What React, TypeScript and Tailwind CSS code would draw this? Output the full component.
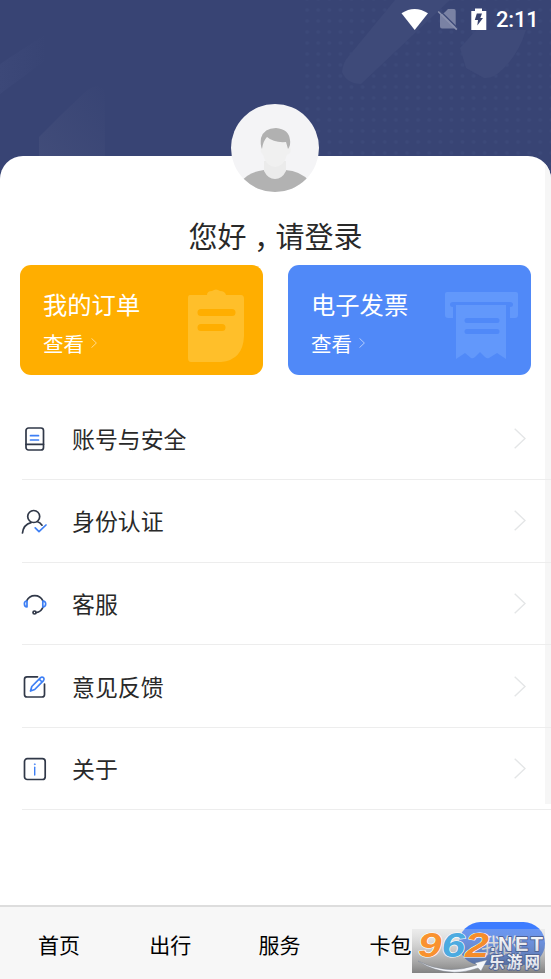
import type { ReactNode } from 'react';

const NAVY = '#303848';
const BLUE = '#3d7ff5';

function Header() {
  return (
    <svg className="absolute inset-0 h-full w-full" viewBox="0 0 551 190" preserveAspectRatio="none" aria-hidden="true">
      <defs>
        <pattern id="dots" x="291" y="5" width="11.1" height="11" patternUnits="userSpaceOnUse">
          <circle cx="5" cy="5" r="1.8" fill="#3c4979" />
        </pattern>
        <linearGradient id="shard" x1="0" y1="1" x2="1" y2="0">
          <stop offset="0" stopColor="#424d7a" />
          <stop offset="1" stopColor="#384474" />
        </linearGradient>
        <linearGradient id="edge" x1="0" y1="0" x2="1" y2="0">
          <stop offset="0" stopColor="#3c4878" />
          <stop offset="1" stopColor="#384474" />
        </linearGradient>
      </defs>
      <rect width="551" height="190" fill="#384474" />
      <rect x="300" width="251" height="170" fill="url(#dots)" />
      <path d="M39 170V137L62 114L83 94Q97 80 105 91V170Z" fill="url(#shard)" />
      <path d="M0 64L46 34V60L0 94Z" fill="url(#edge)" />
      <path d="M395 0H450L361 84Q347 84 342 72Q343 62 348 57Z" fill="#3e4a79" />
      <path d="M460 48L476 30H526Q519 53 504 68Q494 79 484 78L466 68Z" fill="#3e4a79" />
    </svg>
  );
}

function StatusBar() {
  return (
    <div className="relative flex h-10 justify-end">
      <svg className="h-10 w-[100px]" viewBox="395 0 100 40" aria-hidden="true">
        <path d="M401.5 13.3Q414.5 4.6 428 13.3L414.7 30Z" fill="#fff" />
        <path d="M444.500 12.500L448 9H454Q455.700 9 455.700 11V27L454.500 28.500H442Q440 28.500 440 26.500V15Z" fill="#7a82a4" />
        <path d="M439.500 10.300L458 28.500" stroke="#3e4a79" strokeWidth="1.3" />
        <path d="M438.200 11.500L456.800 29.700" stroke="#8a91af" strokeWidth="1.7" />
        <path d="M471.300 11H475V8.500H482V11H486.300V30H471.300Z" fill="#fff" />
        <path d="M476.800 13.500H482L480.300 18H483L477.300 25.500L478 20H474.800Z" fill="#36416d" />
      </svg>
      <span className="mr-[12px] w-[44px] whitespace-nowrap pl-[1px] pt-[4px] font-[Roboto] text-[22px] font-medium leading-8 tracking-[-0.2px] text-white">2:11</span>
    </div>
  );
}

function Avatar() {
  return (
    <svg className="absolute left-[231px] top-[-52px] size-[88px]" viewBox="0 0 88 88" aria-hidden="true">
      <defs>
        <clipPath id="face"><circle cx="44" cy="44" r="44" /></clipPath>
      </defs>
      <g clipPath="url(#face)">
        <rect width="88" height="88" fill="#f4f4f6" />
        <path d="M10 78Q17 68 33 66H54Q70 67 78 77V88H10Z" fill="#b2b2b2" />
        <path d="M33 57H55V67Q51 75 44 75Q37 75 33 67Z" fill="#ebebeb" />
        <path d="M31 34H58V43Q61 44 59 49L56 51Q53 62 44 63Q35 62 32 51L30 48Q29 43 31 43Z" fill="#f0f0f0" />
        <path d="M31 45Q29 41 30 34Q33 24 45 24Q58 25 59 36Q60 41 57 45L55 38Q43 39 36 33Q32 37 31 45Z" fill="#b1b1b1" />
      </g>
    </svg>
  );
}

function Arrow({ className }: { className: string }) {
  return (
    <svg className={className} viewBox="0 0 12 21" fill="none" stroke="currentColor" strokeWidth="1.4" aria-hidden="true">
      <path d="M.7.7L11 10.500L.7 20.300" />
    </svg>
  );
}

function Card({ title, color, children }: { title: string; color: string; children: ReactNode }) {
  return (
    <div className={`flex h-[110px] w-[243px] justify-between rounded-[11px] pl-[23px] ${color}`}>
      <div className="pt-[23px] text-white">
        <div className="whitespace-nowrap text-[24.300px] leading-[32px]">{title}</div>
        <div className="mt-[8px] flex items-center text-[20.500px] leading-[30px]">
          查看
          <Arrow className="ml-[7px] h-[10px] w-[6px] text-white/60 [stroke-width:2px]" />
        </div>
      </div>
      {children}
    </div>
  );
}

const menu: { label: string; icon: ReactNode }[] = [
  {
    label: '账号与安全',
    icon: (
      <>
        <rect x="6" y="4" width="17.500" height="22" rx="2.5" stroke={NAVY} />
        <path d="M6 20.300H23.500" stroke={NAVY} />
        <path d="M10.500 11.700H18.500M10.500 16H18.500" stroke={BLUE} />
      </>
    ),
  },
  {
    label: '身份认证',
    icon: (
      <>
        <circle cx="13.700" cy="10.500" r="6" stroke={NAVY} />
        <path d="M2.500 27Q3.500 18.500 11 16.600M17.500 15.800Q20 16.500 22 19.200" stroke={NAVY} />
        <path d="M15.200 21.800L19 25.600L26 19" stroke={BLUE} />
      </>
    ),
  },
  {
    label: '客服',
    icon: (
      <>
        <path d="M6.800 11.700A8.800 8.800 0 0 1 22.800 11.700M23.200 17.500Q21.500 23 16 23.700" stroke={NAVY} />
        <circle cx="14.500" cy="23.500" r="1.500" stroke={NAVY} />
        <path d="M7 12.200Q4.400 12 4.400 14.800Q4.400 17.900 7 18Z" stroke={BLUE} />
        <path d="M22.800 12.200Q25.700 12 25.700 15Q25.500 18 22.800 18Z" stroke={BLUE} />
      </>
    ),
  },
  {
    label: '意见反馈',
    icon: (
      <>
        <path d="M17.500 4.800H7Q4.500 4.800 4.500 7.300V22.500Q4.500 25 7 25H22Q24.500 25 24.500 22.500V12" stroke={NAVY} />
        <path d="M10.500 19L11.800 14.500L20.600 5.600Q22 4.400 23.600 5.700Q24.800 7.200 23.500 8.600L14.700 17.500ZM19.200 7.200L22.100 10" stroke={BLUE} />
      </>
    ),
  },
  {
    label: '关于',
    icon: (
      <>
        <rect x="4.500" y="4.700" width="20.700" height="20.800" rx="2.8" stroke={NAVY} />
        <path d="M14.700 13.200V21" stroke={BLUE} strokeWidth="1.4" />
        <circle cx="14.700" cy="10.200" r=".55" fill={BLUE} stroke={BLUE} strokeWidth=".5" />
      </>
    ),
  },
];

function Watermark() {
  return (
    <svg className="absolute left-[412px] top-[22px] h-[44px] w-[133px] overflow-visible" viewBox="0 0 133 44" role="img">
      <defs>
        <linearGradient id="veil" x1="0" y1="0" x2="0" y2="1">
          <stop offset="0" stopColor="#d2d2d2" stopOpacity=".3" />
          <stop offset="1" stopColor="#505050" stopOpacity=".7" />
        </linearGradient>
        <linearGradient id="steel" x1="0" y1="0" x2="0" y2="1">
          <stop offset="0" stopColor="#fff" />
          <stop offset="1" stopColor="#d4d8e2" />
        </linearGradient>
      </defs>
      <rect width="133" height="44" fill="url(#veil)" />
      <path d="M6 32Q34 47 65 36L63 34L75 31L69 42L66 39Q34 50 6 32Z" fill="#f5f7fb" stroke="#7c8698" strokeWidth=".4" />
      <g fontFamily="Liberation Sans, sans-serif" fontWeight="700" fontStyle="italic" fontSize="35" stroke="#fff" strokeWidth="1.2" paintOrder="stroke" strokeLinejoin="round">
        <text x="6" y="28" textLength="23.500" lengthAdjust="spacingAndGlyphs" fill="#f9922f">9</text>
        <text x="29.500" y="28" textLength="23.500" lengthAdjust="spacingAndGlyphs" fill="#4dabe0">6</text>
        <text x="53" y="28" textLength="24" lengthAdjust="spacingAndGlyphs" fill="#f58d2c">2</text>
      </g>
      <g fill="url(#steel)" stroke="#506393" strokeWidth="1.8" paintOrder="stroke" strokeLinejoin="round" fontWeight="700">
        <text x="78" y="22" fontSize="20" textLength="53" lengthAdjust="spacing" fontFamily="Liberation Sans, sans-serif">.NET</text>
        <text x="77" y="39" fontSize="15.500" textLength="51" lengthAdjust="spacing" fontFamily="Noto Sans CJK SC, sans-serif">乐游网</text>
      </g>
    </svg>
  );
}

export default function App() {
  return (
    <div className="relative flex h-[979px] w-[551px] flex-col overflow-hidden bg-white font-['Noto_Sans_CJK_SC',sans-serif] text-[#292929]">
      <header className="relative h-[156px] shrink-0">
        <div className="absolute inset-x-0 top-0 h-[190px]"><Header /></div>
        <StatusBar />
      </header>

      <main className="relative h-[749px] shrink-0 rounded-t-[23px] bg-white">
        <div className="absolute inset-0 overflow-hidden rounded-t-[23px]">
          <div className="ml-auto mt-[4px] h-[644px] w-[6px] bg-[#f6f6f6]" />
        </div>
        <Avatar />
        <h1 className="relative flex h-[109px] justify-center pt-[59px] text-[29px] font-normal leading-[40px]">
          <span>您好</span>
          <span lang="zh-Hant" className="relative top-[10px] font-['Noto_Sans_CJK_TC',sans-serif]">，</span>
          <span>请登录</span>
        </h1>
        <section className="relative flex gap-[25px] px-5">
          <Card title="我的订单" color="bg-[#ffae00]">
            <svg className="mr-[18px] mt-[22px] h-[78px] w-[60px]" viewBox="0 0 60 78" fill="#ffbf2a" aria-hidden="true">
              <path d="M5 8H22Q22 4 27 4Q31 1 35 4Q40 4 41 8H56Q59 8 59 12V49Q58 73 36 75H6Q3 75 3 71V11Q3 8 5 8Z" />
              <path d="M16 25.500H47M16 40.500H37" stroke="#ffae00" strokeWidth="7" strokeLinecap="round" />
            </svg>
          </Card>
          <Card title="电子发票" color="bg-[#5089f8]">
            <svg className="mr-[12px] mt-[25px] h-[71px] w-[76px]" viewBox="0 0 76 71" fill="#6298fb" aria-hidden="true">
              <path d="M4 2H73Q75 2 75 4V25Q75 28 72 28H67V17Q70 17 70 14.500Q70 12 67 12H10Q7 12 7 14.500Q7 17 10 17V28H5Q2 28 2 25V4Q2 2 4 2Z" />
              <path d="M13 15H63V69L54 63L46 68Q44 69 42 67L37 62L32 67Q30 69 28 68L22 63L13 69Z" />
              <path d="M24 30.500H54M24 41.500H54" stroke="#5089f8" strokeWidth="5" strokeLinecap="round" />
            </svg>
          </Card>
        </section>
        <ul className="relative ml-[22px] mt-[22.500px]">
          {menu.map(({ label, icon }) => (
            <li key={label} className="flex h-[82.600px] items-center border-b-[1.500px] border-[#ededed]">
              <svg className="ml-[-2px] mt-[1px] size-[30px] shrink-0" viewBox="0 0 30 30" fill="none" strokeWidth="1.7" strokeLinecap="round" strokeLinejoin="round" aria-hidden="true">
                {icon}
              </svg>
              <span className="-mt-px ml-[22px] flex-1 text-[22.900px] leading-8">{label}</span>
              <Arrow className="mr-[25.500px] h-[21px] w-[12px] text-[#e4e6e7]" />
            </li>
          ))}
        </ul>
      </main>

      <nav className="relative h-[74px] shrink-0 border-t-2 border-[#dddddd] bg-[#f7f7f7] text-[21px] text-black">
        <div className="grid h-full grid-cols-5 pt-[21px] leading-[32px]">
          <span className="pl-[38px]">首页</span>
          <span className="pl-[39px]">出行</span>
          <span className="pl-[38px]">服务</span>
          <span className="pl-[39px]">卡包</span>
          <span className="-mt-[6px] ml-[18px] h-[43px] w-[86px] rounded-[22px] bg-[#3d7cff] pt-[6px] text-center text-white">我的</span>
        </div>
        <Watermark />
      </nav>
    </div>
  );
}
